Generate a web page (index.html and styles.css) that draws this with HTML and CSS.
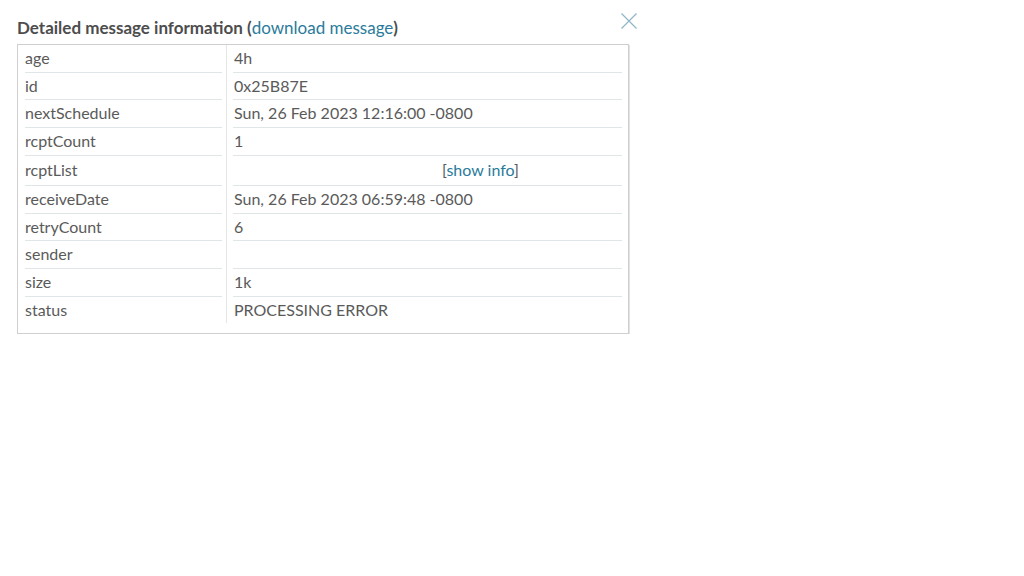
FILE: index.html
```html
<!DOCTYPE html>
<html>
<head>
<meta charset="utf-8">
<link rel="stylesheet" href="styles.css">
</head>
<body>
<div class="page">
  <div class="header">
    <h1 class="title">Detailed message information (<a class="link" href="#">download message</a>)</h1>
    <button class="close" aria-label="Close">
      <svg width="16" height="16" viewBox="0 0 16 16"><path d="M0.5 0.5 L15.5 15.5 M15.5 0.5 L0.5 15.5" stroke="#8fb6c6" stroke-width="1.2" fill="none"/></svg>
    </button>
  </div>
  <div class="box">
    <div class="grid">
      <div class="cell label">age</div><div class="cell value">4h</div>
      <div class="cell label">id</div><div class="cell value">0x25B87E</div>
      <div class="cell label">nextSchedule</div><div class="cell value">Sun, 26 Feb 2023 12:16:00 -0800</div>
      <div class="cell label">rcptCount</div><div class="cell value">1</div>
      <div class="cell label tall">rcptList</div><div class="cell value tall info">[<a class="link" href="#">show info</a>]</div>
      <div class="cell label">receiveDate</div><div class="cell value">Sun, 26 Feb 2023 06:59:48 -0800</div>
      <div class="cell label">retryCount</div><div class="cell value">6</div>
      <div class="cell label">sender</div><div class="cell value"></div>
      <div class="cell label">size</div><div class="cell value">1k</div>
      <div class="cell label last">status</div><div class="cell value last">PROCESSING ERROR</div>
    </div>
  </div>
</div>
</body>
</html>
```
FILE: styles.css
```css
html, body {
  margin: 0;
  padding: 0;
  background: #fff;
}
body {
  font-family: "Lato", "Noto Sans", sans-serif;
  color: #5a5a5a;
}
.page {
  padding: 13px 0 0 17px;
}
.header {
  width: 620px;
  display: flex;
  justify-content: space-between;
  align-items: flex-start;
}
.title {
  margin: 4px 0 5px 0;
  font-size: 17px;
  line-height: 22px;
  font-weight: bold;
  color: #4d4d4d;
}
.link {
  color: #2a7b9b;
  text-decoration: none;
  font-weight: normal;
}
.close {
  border: 0;
  background: none;
  padding: 0;
  margin: 0;
  width: 16px;
  height: 16px;
  display: block;
  cursor: pointer;
}
.close svg {
  display: block;
}
.box {
  width: 598px;
  border: 1px solid #cfcfcf;
  box-shadow: 1px 1px 0 #e2e2e2;
  padding: 0 5px 10px 7px;
}
.grid {
  display: grid;
  grid-template-columns: 197px 389px;
  column-gap: 11px;
  background: linear-gradient(#e4e6e6, #e4e6e6) no-repeat 201px 0 / 1px 100%;
}
.cell {
  font-size: 16px;
  line-height: 25.7px;
  padding-bottom: 1px;
  border-bottom: 1px solid #dfe6e8;
  white-space: nowrap;
}
.label {
  padding-left: 0;
}
.value {
  padding-left: 1px;
}
.tall {
  line-height: 28px;
}
.info {
  padding-left: 209px;
}
.last {
  border-bottom: 0;
}
```
